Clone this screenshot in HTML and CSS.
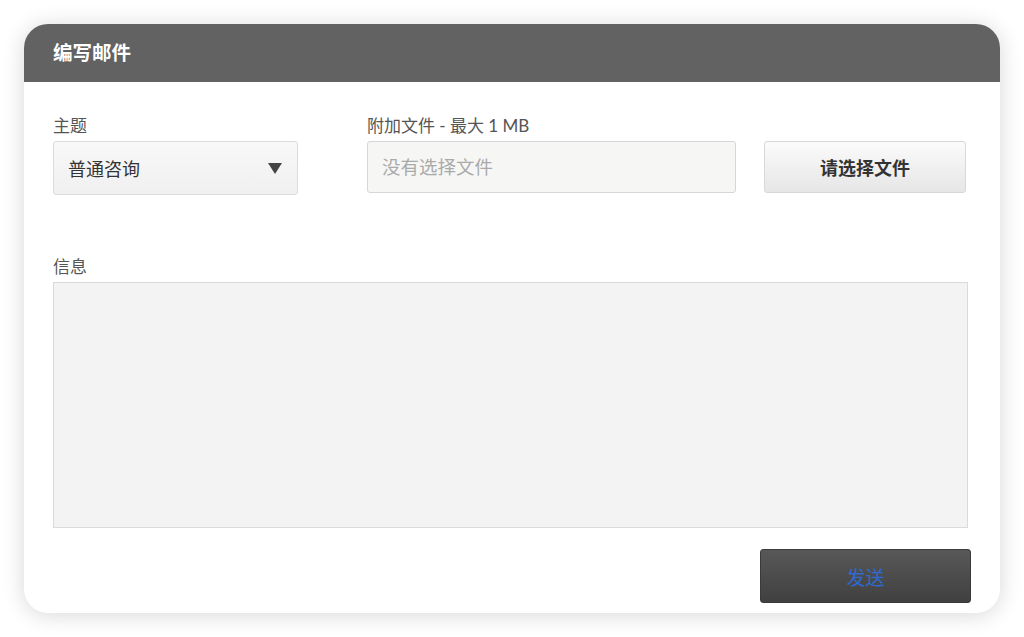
FILE: index.html
```html
<!DOCTYPE html>
<html lang="zh-CN">
<head>
  <meta charset="UTF-8" />
  <title>编写邮件</title>
  <link rel="stylesheet" href="styles.css">
</head>
<body>
  <div class="card">
    <header class="card-head">编写邮件</header>
    <div class="card-body">
      <div class="row">
        <div class="field subject">
          <label>主题</label>
          <div class="select">
            <span>普通咨询</span>
            <svg width="14" height="11" viewBox="0 0 14 11"><path d="M0 0h14L7 11z" fill="#444"/></svg>
          </div>
        </div>
        <div class="field file">
          <label>附加文件 - 最大 1 MB</label>
          <div class="file-box">没有选择文件</div>
        </div>
        <button class="pick-btn">请选择文件</button>
      </div>

      <div class="field message">
        <label>信息</label>
        <div class="textarea"></div>
      </div>

      <div class="actions">
        <button class="send-btn">发送</button>
      </div>
    </div>
  </div>
</body>
</html>
```

FILE: styles.css
```css
* { box-sizing: border-box; }
body { margin: 0; padding: 24px; background: #fff; font-family: "Lato", "Noto Sans CJK SC", sans-serif; color: #333; }
.card { width: 976px; height: 589px; border-radius: 24px; background: #fff; box-shadow: 0 2px 22px rgba(0,0,0,0.16); overflow: hidden; }
.card-head { height: 58px; background: #626262; color: #fff; font-size: 19.5px; font-weight: bold; padding: 0 29px; line-height: 58px; }
.card-body { padding: 34px 29px 0 29px; }
.row { display: flex; align-items: flex-start; }
.field label { display: block; font-size: 17px; color: #555; line-height: 20px; margin-bottom: 5px; }
.subject { width: 245px; }
.select { height: 54px; border: 1px solid #dcdcdc; border-radius: 3px; background: linear-gradient(#f8f8f8, #f0f0f0); display: flex; align-items: center; justify-content: space-between; padding: 0 15px 0 14px; font-size: 18px; color: #333; }
.file { width: 369px; margin-left: 69px; }
.file-box { height: 52px; border: 1px solid #d6d6d6; border-radius: 3px; background: #f6f6f5; font-size: 18.5px; color: #aaa; padding: 0 14px; line-height: 50px; }
.pick-btn { width: 202px; height: 52px; margin-left: 28px; margin-top: 25px; border: 1px solid #d8d8d8; border-radius: 3px; background: linear-gradient(#fbfbfb, #e6e6e6); font-family: inherit; font-size: 18px; font-weight: bold; color: #333; }
.message { margin-top: 62px; }
.textarea { width: 915px; height: 246px; border: 1px solid #dadada; background: #f3f3f3; }
.actions { display: flex; justify-content: flex-end; margin-top: 21px; width: 918px; }
.send-btn { width: 211px; height: 54px; border: 1px solid #3a3a3a; border-radius: 3px; background: linear-gradient(#585858, #404040); font-family: inherit; font-size: 19px; color: #2f6ad0; }
```
